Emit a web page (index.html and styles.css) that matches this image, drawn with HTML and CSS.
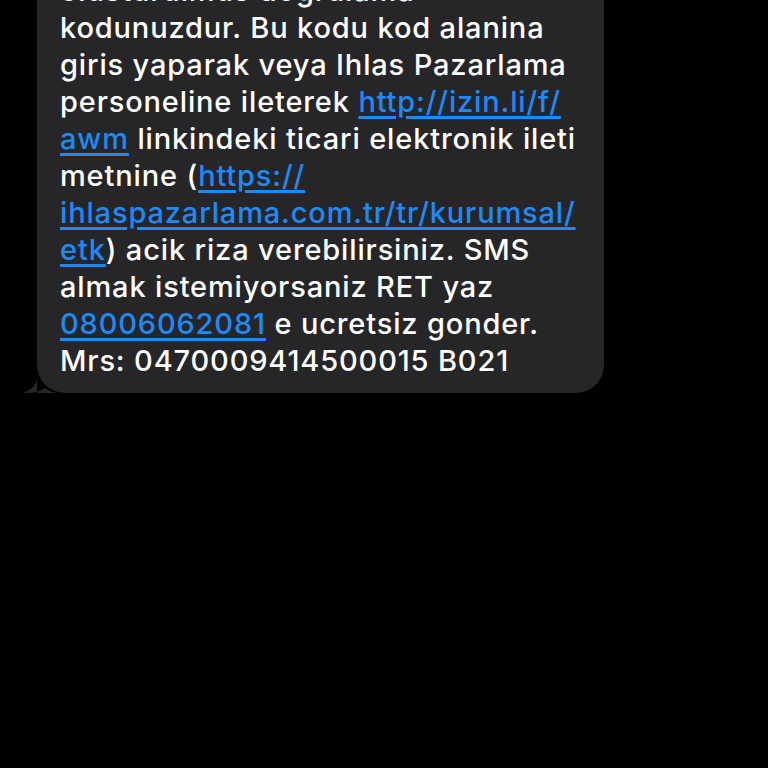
FILE: index.html
```html
<!DOCTYPE html>
<html lang="tr">
<head>
    <meta charset="UTF-8">
    <meta name="viewport" content="width=device-width, initial-scale=1.0">
    <title>Mesaj</title>
    <link rel="stylesheet" href="styles.css">
</head>
<body>
    <div class="thread">
        <div class="bubble">
            <p class="message">
                olusturulmus dogrulama<br>
                kodunuzdur. Bu kodu kod alanina<br>
                giris yaparak veya Ihlas Pazarlama<br>
                personeline ileterek <a href="http://izin.li/f/awm">http://izin.li/f/<br>awm</a> linkindeki ticari elektronik ileti<br>
                metnine (<a href="https://ihlaspazarlama.com.tr/tr/kurumsal/etk">https://<br>ihlaspazarlama.com.tr/tr/kurumsal/<br>etk</a>) acik riza verebilirsiniz. SMS<br>
                almak istemiyorsaniz RET yaz<br>
                <a href="tel:08006062081">08006062081</a> e ucretsiz gonder.<br>
                Mrs: 0470009414500015 B021
            </p>
            <svg class="tail" width="34" height="24" viewBox="0 0 34 24">
                <path d="M14 0 V8 C14 16 8 21 0 24 C9 24.5 16 22.5 22 19 C25 21.5 29 23.5 34 24 H14 Z" fill="#262628"/>
            </svg>
        </div>
    </div>
</body>
</html>
```

FILE: styles.css
```css
body {
    margin: 0;
    background: #000;
    font-family: Inter, "Noto Sans", sans-serif;
    height: 100vh;
    overflow: hidden;
}
.thread {
    padding-left: 37px;
}
.bubble {
    position: relative;
    width: 567px;
    margin-top: -40px;
    background: #262628;
    border-radius: 28px;
    padding: 12px 20px 14px 23px;
    box-sizing: border-box;
}
.message {
    margin: 0;
    color: #fff;
    font-size: 29px;
    font-weight: 500;
    letter-spacing: 0.85px;
    line-height: 37px;
    white-space: nowrap;
}
.message a {
    color: #1b8bfa;
    text-decoration: underline;
    text-decoration-thickness: 3px;
    text-underline-offset: 4px;
}
.tail {
    position: absolute;
    left: -14px;
    bottom: 0;
}
```
